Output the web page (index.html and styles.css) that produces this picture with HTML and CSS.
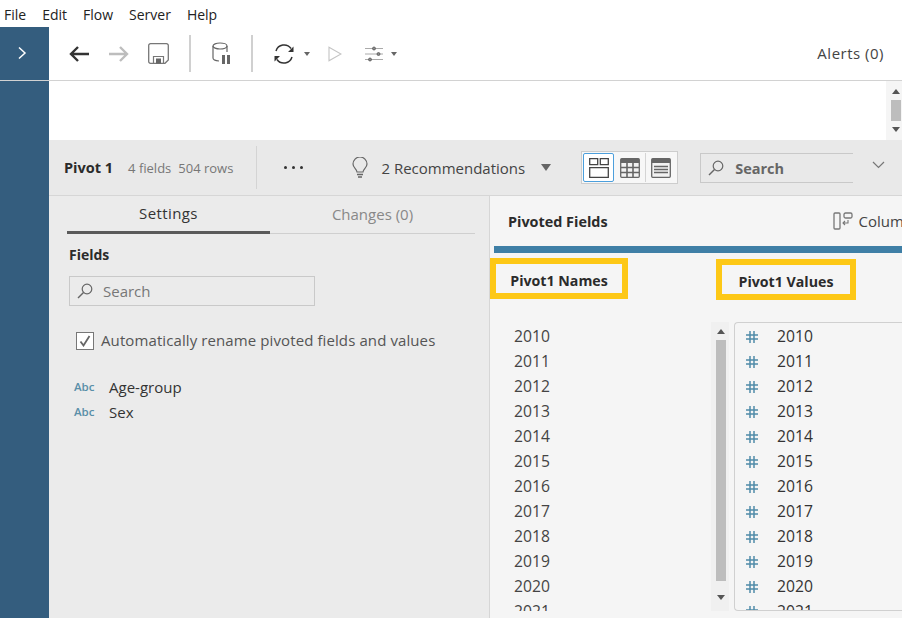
FILE: index.html
```html
<!DOCTYPE html>
<html lang="en">
<head>
    <meta charset="UTF-8">
    <title>Pivot 1 - Flow</title>
    <link rel="stylesheet" href="styles.css">
</head>
<body>
    <svg class="defs" width="0" height="0">
        <symbol id="hash" viewBox="0 0 12 12">
            <path d="M4 0v12M8 0v12M0 4h12M0 8h12" fill="none" stroke="#4f8ba8" stroke-width="1.500"/>
        </symbol>
    </svg>

    <div class="menu">
        <span>File</span><span>Edit</span><span>Flow</span><span>Server</span><span>Help</span>
    </div>

    <div class="top">
        <div class="rail-btn">
            <svg width="10" height="14" viewBox="0 0 10 14"><path d="M2 1.500 8 7l-6 5.500" fill="none" stroke="#fff" stroke-width="1.500"/></svg>
        </div>
        <div class="toolbar">
            <svg class="t-back" width="20" height="16" viewBox="0 0 20 16"><path d="M20 8H2M9 1 2 8l7 7" fill="none" stroke="#333" stroke-width="2.400"/></svg>
            <svg class="t-fwd" width="20" height="16" viewBox="0 0 20 16"><path d="M0 8h18M11 1l7 7-7 7" fill="none" stroke="#bdbdbd" stroke-width="2.400"/></svg>
            <svg class="t-save" width="21" height="21" viewBox="0 0 21 21"><path d="M2.500 .7h16a1.800 1.800 0 0 1 1.800 1.800v14.500l-3.300 3.300H2.500A1.800 1.800 0 0 1 .7 18.500v-16A1.800 1.800 0 0 1 2.500 .7z" fill="none" stroke="#777" stroke-width="1.300"/><path d="M5.500 20v-6.500h10V20" fill="none" stroke="#777" stroke-width="1.200"/><rect x="8" y="15.500" width="5" height="5" fill="#666"/></svg>
            <i class="sep t-sep1"></i>
            <svg class="t-db" width="18" height="23" viewBox="0 0 18 23"><ellipse cx="8" cy="4" rx="7" ry="3" fill="none" stroke="#666" stroke-width="1.200"/><path d="M1 4v12c0 1.500 2.500 2.700 6 3M15 4v6" fill="none" stroke="#666" stroke-width="1.200"/><rect x="10" y="13" width="3" height="9" fill="#666"/><rect x="15" y="13" width="3" height="9" fill="#666"/></svg>
            <i class="sep t-sep2"></i>
            <svg class="t-sync" width="22" height="22" viewBox="0 0 22 22"><path d="M3 8a8.500 8.500 0 0 1 15-2.500M19 14a8.500 8.500 0 0 1-15 2.500" fill="none" stroke="#333" stroke-width="1.500"/><path d="M20.500 3.500V9H15zM1.500 18.500V13H7z" fill="#333"/></svg>
            <i class="caret t-c1"></i>
            <svg class="t-play" width="14" height="16" viewBox="0 0 14 16"><path d="M1 1.200 13 8 1 14.800z" fill="none" stroke="#c4c4c4" stroke-width="1.100"/></svg>
            <svg class="t-tune" width="19" height="16" viewBox="0 0 19 16"><path d="M0 2.500h18M0 8h18M0 13.500h18" stroke="#aaa" stroke-width="1"/><circle cx="9" cy="2.500" r="1.500" fill="#888" stroke="#555" stroke-width=".8"/><circle cx="13.500" cy="8" r="1.500" fill="#888" stroke="#555" stroke-width=".8"/><circle cx="5" cy="13.500" r="1.500" fill="#888" stroke="#555" stroke-width=".8"/></svg>
            <i class="caret t-c2"></i>
            <span class="alerts">Alerts (0)</span>
        </div>
    </div>

    <div class="body">
        <div class="rail"></div>
        <div class="work">
            <div class="strip">
                <div class="strip-bar">
                    <i class="up"></i>
                    <div class="strip-thumb"></div>
                    <i class="down"></i>
                </div>
            </div>

            <div class="head">
                <b class="step">Pivot 1</b>
                <span class="meta">4 fields</span>
                <span class="meta meta2">504 rows</span>
                <i class="head-sep"></i>
                <div class="dots"><i></i><i></i><i></i></div>
                <svg class="bulb" width="16" height="22" viewBox="0 0 16 22"><path d="M5 15c0-3-4-4-4-8a7 7 0 0 1 14 0c0 4-4 5-4 8z" fill="none" stroke="#666" stroke-width="1.200"/><path d="M5 17.500h6M6 20h4" stroke="#666" stroke-width="1.500"/></svg>
                <span class="recs">2 Recommendations</span>
                <i class="caret caret-big"></i>
                <div class="views">
                    <div class="view on">
                        <svg width="20" height="20" viewBox="0 0 20 20"><path d="M.7.700h8v6h-8zM11.300.700h8v6h-8zM.7 9.700h18.600v9.600H.7z" fill="none" stroke="#444" stroke-width="1.300"/></svg>
                    </div>
                    <div class="view">
                        <svg width="20" height="20" viewBox="0 0 20 20"><rect x=".7" y=".7" width="18.600" height="18.600" rx="1" fill="#f2f2f2" stroke="#666" stroke-width="1.300"/><path d="M1 3h18" stroke="#666" stroke-width="4"/><path d="M1 9.500h18M1 14.500h18M7 5v14M13 5v14" stroke="#666" stroke-width="1.600"/></svg>
                    </div>
                    <div class="view view-last">
                        <svg width="20" height="20" viewBox="0 0 20 20"><rect x=".7" y=".7" width="18.600" height="18.600" rx="1" fill="#f2f2f2" stroke="#666" stroke-width="1.300"/><path d="M1 3h18" stroke="#666" stroke-width="4"/><path d="M3 8.500h14M3 11.500h14M3 14.500h14" stroke="#666" stroke-width="1.300"/></svg>
                    </div>
                </div>
                <div class="head-search">
                    <svg width="16" height="16" viewBox="0 0 16 16"><circle cx="10" cy="6" r="4.800" fill="none" stroke="#666" stroke-width="1.200"/><path d="M6.500 9.500 1 15" stroke="#666" stroke-width="1.400"/></svg>
                    <b>Search</b>
                </div>
                <svg class="chev" width="13" height="8" viewBox="0 0 13 8"><path d="M1 1l5.500 5.500L12 1" fill="none" stroke="#777" stroke-width="1.200"/></svg>
            </div>

            <div class="panes">
                <div class="left">
                    <div class="tabs">
                        <div class="tab active">Settings</div>
                        <div class="tab">Changes (0)</div>
                    </div>
                    <div class="fields-title">Fields</div>
                    <div class="field-search">
                        <svg width="16" height="16" viewBox="0 0 16 16"><circle cx="10" cy="6" r="4.800" fill="none" stroke="#666" stroke-width="1.200"/><path d="M6.500 9.500 1 15" stroke="#666" stroke-width="1.400"/></svg>
                        <span>Search</span>
                    </div>
                    <div class="check-row">
                        <span class="check">
                            <svg width="12" height="12" viewBox="0 0 12 12"><path d="M1.500 6.500 4.500 10.500 10.500 1" fill="none" stroke="#666" stroke-width="1.800"/></svg>
                        </span>
                        <span class="check-label">Automatically rename pivoted fields and values</span>
                    </div>
                    <div class="field"><b class="abc">Abc</b>Age-group</div>
                    <div class="field"><b class="abc">Abc</b>Sex</div>
                </div>

                <div class="right">
                    <div class="right-head">
                        <b>Pivoted Fields</b>
                        <svg class="col-icon" width="20" height="18" viewBox="0 0 20 18"><rect x="1" y="1" width="6" height="16" rx="1" fill="none" stroke="#777" stroke-width="1.300"/><rect x="11" y="1" width="8" height="5" rx="1.500" fill="none" stroke="#777" stroke-width="1.300"/><path d="M15 8v3h-5M12 9l-2 2 2 2" fill="none" stroke="#777" stroke-width="1.100"/></svg>
                        <span class="col-label">Columns</span>
                    </div>
                    <div class="blue-bar"></div>
                    <div class="marks">
                        <div class="mark mark-names">Pivot1 Names</div>
                        <div class="mark mark-values">Pivot1 Values</div>
                    </div>
                    <div class="lists">
                        <div class="names">
                            <div>2010</div><div>2011</div><div>2012</div><div>2013</div>
                            <div>2014</div><div>2015</div><div>2016</div><div>2017</div>
                            <div>2018</div><div>2019</div><div>2020</div><div>2021</div>
                        </div>
                        <div class="vbar">
                            <i class="up"></i>
                            <div class="thumb"></div>
                            <i class="down"></i>
                        </div>
                        <div class="values">
                            <div><svg><use href="#hash"/></svg>2010</div>
                            <div><svg><use href="#hash"/></svg>2011</div>
                            <div><svg><use href="#hash"/></svg>2012</div>
                            <div><svg><use href="#hash"/></svg>2013</div>
                            <div><svg><use href="#hash"/></svg>2014</div>
                            <div><svg><use href="#hash"/></svg>2015</div>
                            <div><svg><use href="#hash"/></svg>2016</div>
                            <div><svg><use href="#hash"/></svg>2017</div>
                            <div><svg><use href="#hash"/></svg>2018</div>
                            <div><svg><use href="#hash"/></svg>2019</div>
                            <div><svg><use href="#hash"/></svg>2020</div>
                            <div><svg><use href="#hash"/></svg>2021</div>
                        </div>
                    </div>
                </div>
            </div>
        </div>
    </div>
</body>
</html>
```

FILE: styles.css
```css
* {
    box-sizing: border-box;
}
html, body {
    margin: 0;
    height: 100%;
    overflow: hidden;
}
body {
    width: 902px;
    height: 618px;
    font-family: "Open Sans", "Noto Sans", sans-serif;
    font-size: 15px;
    color: #333;
    background: #fff;
    display: flex;
    flex-direction: column;
}
i {
    font-style: normal;
    display: block;
}
.defs {
    display: none;
}

/* menu */
.menu {
    height: 27px;
    padding-left: 4px;
    padding-top: 2px;
    display: flex;
    gap: 16px;
    align-items: center;
    font-size: 14px;
    color: #222;
}

/* toolbar */
.top {
    height: 54px;
    display: flex;
    border-bottom: 1px solid #d2d2d2;
}
.rail-btn {
    width: 49px;
    background: #345d7e;
    display: flex;
    align-items: center;
    justify-content: center;
    padding-right: 5px;
    padding-bottom: 1px;
}
.toolbar {
    flex: 1;
    display: flex;
    align-items: center;
    padding-left: 20px;
    padding-right: 18px;
}
.toolbar svg {
    flex: none;
}
.t-fwd { margin-left: 20px; }
.t-save { margin-left: 19px; }
.sep {
    width: 2px;
    height: 37px;
    background: #d0d0d0;
}
.t-sep1 { margin-left: 20px; }
.t-db { margin-left: 21px; }
.t-sep2 { margin-left: 21px; }
.t-sync { margin-left: 20px; }
.caret {
    width: 0;
    height: 0;
    border-left: 3px solid transparent;
    border-right: 3px solid transparent;
    border-top: 4px solid #666;
}
.t-c1 { margin-left: 9px; }
.t-play { margin-left: 18px; }
.t-tune { margin-left: 23px; }
.t-c2 { margin-left: 7px; }
.alerts {
    margin-left: auto;
    margin-bottom: 2px;
    font-size: 15px;
    letter-spacing: .5px;
    color: #444;
}

/* body */
.body {
    flex: 1;
    min-height: 0;
    display: flex;
}
.rail {
    width: 49px;
    background: #345d7e;
}
.work {
    flex: 1;
    min-width: 0;
    display: flex;
    flex-direction: column;
}
.strip {
    height: 59px;
    display: flex;
    justify-content: flex-end;
}
.strip-bar {
    width: 16px;
    background: #f5f5f5;
    padding: 8px 1px 0 5px;
    display: flex;
    flex-direction: column;
    align-items: center;
}
.strip-bar .up {
    margin-top: 0;
}
.strip-bar .down {
    margin-top: 6px;
}
.strip-thumb {
    width: 10px;
    height: 21px;
    margin-top: 6px;
    background: #bdbdbd;
}

/* panel header */
.head {
    height: 56px;
    background: #e9e9e9;
    border-bottom: 1px solid #d6d6d6;
    display: flex;
    align-items: center;
    padding-left: 15px;
}
.step {
    font-size: 14.500px;
    color: #2b2b2b;
}
.meta {
    font-size: 13px;
    color: #777;
    margin-left: 15px;
}
.meta2 {
    margin-left: 7px;
}
.head-sep {
    width: 1px;
    height: 43px;
    background: #d4d4d4;
    margin-left: 23px;
}
.dots {
    margin-left: 27px;
    display: flex;
    gap: 5px;
}
.dots i {
    width: 3px;
    height: 3px;
    border-radius: 50%;
    background: #333;
}
.bulb {
    margin-left: 49px;
}
.recs {
    font-size: 15px;
    margin-left: 13px;
    color: #444;
}
.caret-big {
    border-left-width: 5px;
    border-right-width: 5px;
    border-top-width: 7px;
    margin-left: 16px;
}
.views {
    margin-left: 30px;
    width: 97px;
    height: 33px;
    border: 1px solid #cdcdcd;
    background: #f7f7f7;
    display: flex;
    padding: 1px;
}
.view {
    width: 31px;
    display: flex;
    align-items: center;
    justify-content: center;
}
.view.on {
    background: #fff;
    border: 1px solid #4c9fdc;
    border-radius: 2px;
}
.view-last {
    border-left: 1px solid #d4d4d4;
}
.head-search {
    margin-left: 22px;
    width: 153px;
    height: 30px;
    border: 1px solid #c9c9c9;
    border-right: 0;
    display: flex;
    align-items: center;
    gap: 11px;
    padding-left: 7px;
    font-size: 14.500px;
    color: #666;
}
.head-search b {
    padding-top: 2px;
}
.chev {
    margin-left: 19px;
    margin-top: -5px;
}

/* panes */
.panes {
    flex: 1;
    min-height: 0;
    display: flex;
}
.left {
    width: 441px;
    background: #ebebeb;
    border-right: 1px solid #d6d6d6;
    padding-left: 18px;
}
.tabs {
    width: 408px;
    height: 38px;
    display: flex;
    border-bottom: 1px solid #cfcfcf;
}
.tab {
    flex: 1;
    text-align: center;
    color: #888;
    font-size: 15px;
    padding-top: 8px;
}
.tab.active {
    color: #333;
    flex: none;
    width: 203px;
    height: 38px;
    padding-top: 7px;
    letter-spacing: .4px;
    border-bottom: 3px solid #5a5a5a;
}
.fields-title {
    margin: 11px 0 0 2px;
    font-weight: 700;
    font-size: 14px;
    line-height: 20px;
    color: #2b2b2b;
}
.field-search {
    width: 246px;
    height: 30px;
    margin: 11px 0 0 2px;
    border: 1px solid #c9c9c9;
    display: flex;
    align-items: center;
    gap: 10px;
    padding-left: 7px;
    color: #777;
    font-size: 15px;
}
.check-row {
    margin: 26px 0 0 9px;
    display: flex;
    align-items: center;
    gap: 7px;
    color: #555;
    font-size: 15px;
    letter-spacing: .1px;
    line-height: 20px;
}
.check-label {
    margin-top: -2px;
}
.check {
    width: 18px;
    height: 18px;
    border: 1px solid #777;
    background: #fff;
    display: flex;
    align-items: center;
    justify-content: center;
}
.check-row + .field {
    margin-top: 24px;
}
.field {
    margin-left: 7px;
    height: 25px;
    display: flex;
    align-items: center;
    font-size: 15px;
    color: #333;
}
.abc {
    width: 35px;
    font-size: 11.500px;
    font-weight: 600;
    color: #5a8fa8;
}

/* right side */
.right {
    flex: 1;
    min-width: 0;
    background: #f5f5f5;
    display: flex;
    flex-direction: column;
    overflow: hidden;
}
.right-head {
    height: 50px;
    display: flex;
    align-items: center;
    padding-left: 18px;
    white-space: nowrap;
}
.right-head b {
    font-size: 14.400px;
    color: #2b2b2b;
}
.col-icon {
    flex: none;
    margin-left: 225px;
}
.col-label {
    margin-left: 6px;
    font-size: 15px;
    color: #444;
}
.blue-bar {
    height: 7px;
    margin-left: 4px;
    background: #3f7fa6;
}
.marks {
    display: flex;
    align-items: flex-start;
    padding-top: 5px;
    height: 69px;
    gap: 88px;
}
.mark {
    height: 41px;
    border: 6px solid #fdc816;
    background: #f5f5f5;
    padding-top: 3px;
    display: flex;
    align-items: center;
    justify-content: center;
    font-weight: 700;
    font-size: 14.200px;
    color: #2b2b2b;
    white-space: nowrap;
}
.mark-names {
    width: 138px;
}
.mark-values {
    width: 140px;
    margin-top: 1px;
}
.lists {
    height: 289px;
    display: flex;
    align-items: stretch;
}
.names {
    width: 221px;
    padding: 2px 0 0 24px;
    font-size: 15.700px;
    line-height: 25px;
    color: #444;
    overflow: hidden;
}
.vbar {
    width: 18px;
    background: #f0f0f0;
    padding: 0 3px 0 5px;
    display: flex;
    flex-direction: column;
    align-items: center;
}
.up, .down {
    width: 0;
    height: 0;
    border-left: 4px solid transparent;
    border-right: 4px solid transparent;
}
.up {
    border-bottom: 5px solid #555;
    margin-top: 7px;
}
.down {
    border-top: 5px solid #555;
    margin-top: 14px;
}
.thumb {
    width: 10px;
    height: 241px;
    margin-top: 6px;
    background: #bdbdbd;
}
.values {
    margin-left: 5px;
    flex: 1;
    min-width: 0;
    border: 1px solid #d0d0d0;
    border-right: 0;
    border-radius: 4px 0 0 4px;
    padding: 1px 0 0 11px;
    font-size: 15.700px;
    line-height: 25px;
    color: #333;
    overflow: hidden;
}
.values div {
    height: 25px;
    display: flex;
    align-items: center;
}
.values svg {
    width: 12px;
    height: 12px;
    margin-right: 19px;
    flex: none;
}
```
